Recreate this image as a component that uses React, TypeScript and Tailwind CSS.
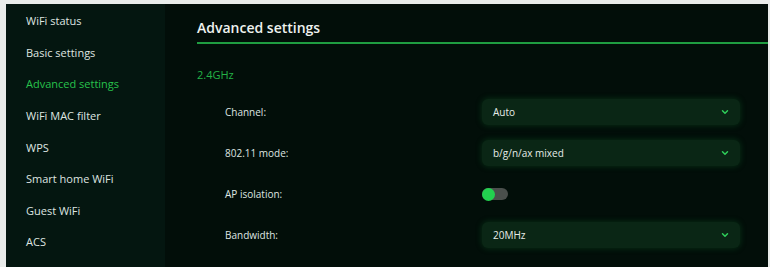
import React from "react";

const menuItems = [
  "WiFi status",
  "Basic settings",
  "Advanced settings",
  "WiFi MAC filter",
  "WPS",
  "Smart home WiFi",
  "Guest WiFi",
  "ACS",
];

const Chevron: React.FC = () => (
  <svg width="10" height="10" viewBox="0 0 24 24" fill="none" stroke="#2fcf5a" strokeWidth="3.5" strokeLinecap="round" strokeLinejoin="round">
    <path d="M6 9l6 6 6-6" />
  </svg>
);

const SelectBox: React.FC<{ value: string }> = ({ value }) => (
  <div className="w-[258px] h-[26px] rounded-md bg-[#0a2615] shadow-[0_0_6px_rgba(20,120,50,0.35)] flex items-center justify-between pl-[11px] pr-[10px]">
    <span className="text-[10px] text-[#e6ece8]">{value}</span>
    <Chevron />
  </div>
);

const App: React.FC = () => {
  const rows = [
    { label: "Channel:", control: <SelectBox value="Auto" /> },
    { label: "802.11 mode:", control: <SelectBox value="b/g/n/ax mixed" /> },
    {
      label: "AP isolation:",
      control: (
        <div className="w-[26px] h-[12px] rounded-full bg-[#4a4f4c] flex items-center">
          <div className="w-[13px] h-[13px] rounded-full bg-[#22d14f]" />
        </div>
      ),
    },
    { label: "Bandwidth:", control: <SelectBox value="20MHz" /> },
  ];

  return (
    <div
      className="w-[770px] h-[267px] bg-[#e9ecea] pt-[4px] pl-[6px] pr-[2px] flex"
      style={{ fontFamily: "'Open Sans', 'Liberation Sans', sans-serif" }}
    >
      <div className="w-[159px] h-full bg-[#041610] flex flex-col pt-[10px] pl-[20px]">
        {menuItems.map((item) => (
          <div
            key={item}
            className={`h-[32px] text-[11px] leading-[14px] ${
              item === "Advanced settings" ? "text-[#27c24c]" : "text-[#dfe5e1]"
            }`}
          >
            {item}
          </div>
        ))}
      </div>

      <div className="flex-1 h-full bg-[#020e09] pl-[32px]">
        <div className="pt-[15px] text-[14px] font-semibold text-[#eef2ef] leading-[18px]">Advanced settings</div>
        <div className="mt-[5px] h-[2px] bg-[#1f9d41]" />
        <div className="mt-[24px] text-[11px] text-[#23b247] leading-[14px]">2.4GHz</div>

        <div className="mt-[17px] flex flex-col gap-[15px] pr-[28px]">
          {rows.map(({ label, control }) => (
            <div key={label} className="flex items-center h-[26px]">
              <span className="w-[285px] pl-[28px] text-[10px] text-[#dfe5e1]">{label}</span>
              {control}
            </div>
          ))}
        </div>
      </div>
    </div>
  );
};

export default App;
